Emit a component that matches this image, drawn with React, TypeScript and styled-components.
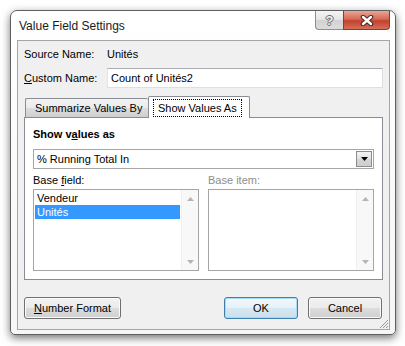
import styled, { createGlobalStyle } from "styled-components";

const GlobalStyle = createGlobalStyle`
  html, body {
    margin: 0;
    padding: 0;
    background: #ffffff;
  }
  body {
    font-family: "Liberation Sans", Arial, sans-serif;
    font-size: 11px;
    color: #000000;
  }
  * {
    box-sizing: border-box;
  }
`;

function CloseGlyph() {
  return (
    <svg width="14" height="11" viewBox="0 0 14 11">
      <path d="M3 2 L11 9 M11 2 L3 9" stroke="#4a2a24" strokeWidth="4.6" strokeLinecap="round" />
      <path d="M3 2 L11 9 M11 2 L3 9" stroke="#ffffff" strokeWidth="2.4" strokeLinecap="round" />
    </svg>
  );
}

function Arrow({ dir, color }: { dir: "up" | "down"; color: string }) {
  return (
    <svg width="7" height="4" viewBox="0 0 7 4">
      {dir === "down" ? <path d="M0 0 H7 L3.5 4 Z" fill={color} /> : <path d="M0 4 H7 L3.5 0 Z" fill={color} />}
    </svg>
  );
}

function Grip() {
  return (
    <svg width="10" height="10" viewBox="0 0 10 10">
      <path d="M9 1 L1 9 M9 4 L4 9 M9 7 L7 9" stroke="#9a9a9a" strokeWidth="1" />
    </svg>
  );
}

function ListBox({ items, selected }: { items: string[]; selected?: number }) {
  return (
    <ListFrame>
      <ListItems>
        {items.map((item, i) => (
          <ListItem key={item} $selected={i === selected}>
            {item}
          </ListItem>
        ))}
      </ListItems>
      <ScrollBar>
        <ScrollArrow>
          <Arrow dir="up" color="#b4b4b4" />
        </ScrollArrow>
        <ScrollArrow>
          <Arrow dir="down" color="#b4b4b4" />
        </ScrollArrow>
      </ScrollBar>
    </ListFrame>
  );
}

export default function App() {
  return (
    <>
      <GlobalStyle />
      <Stage>
        <Window>
          <TitleBar>
            <TitleText>Value Field Settings</TitleText>
            <CaptionButtons>
              <HelpButton>?</HelpButton>
              <CloseButton>
                <CloseGlyph />
              </CloseButton>
            </CaptionButtons>
          </TitleBar>
          <Client>
            <FieldGrid>
              <span>Source Name:</span>
              <span>Unités</span>
              <span>
                <Key>C</Key>ustom Name:
              </span>
              <TextBox>Count of Unités2</TextBox>
            </FieldGrid>
            <TabStrip>
              <Tab $width={123}>Summarize Values By</Tab>
              <Tab $width={102} $active>
                <FocusRect>Show Values As</FocusRect>
              </Tab>
            </TabStrip>
            <Panel>
              <SectionLabel>
                Show v<Key>a</Key>lues as
              </SectionLabel>
              <Combo>
                <ComboText>% Running Total In</ComboText>
                <ComboButton>
                  <Arrow dir="down" color="#000000" />
                </ComboButton>
              </Combo>
              <TwoColumns $top={4} $height={15}>
                <span>
                  Base <Key>f</Key>ield:
                </span>
                <DisabledLabel>Base item:</DisabledLabel>
              </TwoColumns>
              <TwoColumns $top={1} $height={82}>
                <ListBox items={["Vendeur", "Unités"]} selected={1} />
                <ListBox items={[]} />
              </TwoColumns>
            </Panel>
            <ButtonRow>
              <PushButton $width={97}>
                <Key>N</Key>umber Format
              </PushButton>
              <Spacer />
              <PushButton $width={74} $primary>
                OK
              </PushButton>
              <PushButton $width={74}>Cancel</PushButton>
            </ButtonRow>
            <GripCorner>
              <Grip />
            </GripCorner>
          </Client>
        </Window>
      </Stage>
    </>
  );
}

const Stage = styled.div`
  width: 405px;
  height: 346px;
  padding: 10px;
`;

const Window = styled.div`
  width: 386px;
  height: 325px;
  display: flex;
  flex-direction: column;
  border: 1px solid #5f5f5f;
  border-radius: 7px 7px 5px 5px;
  background: linear-gradient(#ffffff, #f6f6f6);
  box-shadow: 0 3px 9px rgba(0, 0, 0, 0.55);
`;

const TitleBar = styled.div`
  height: 29px;
  display: flex;
  align-items: flex-start;
  padding: 0 5px 0 8px;
`;

const TitleText = styled.div`
  margin-top: 7px;
  font-size: 12px;
  line-height: 16px;
  color: #1a1a1a;
`;

const CaptionButtons = styled.div`
  margin-left: auto;
  display: flex;
  height: 19px;
`;

const HelpButton = styled.div`
  width: 28px;
  height: 19px;
  border: 1px solid #8e8e8e;
  border-top: none;
  border-right: none;
  border-radius: 0 0 0 4px;
  background: linear-gradient(#f5f5f5, #e4e4e4 50%, #d2d2d2 51%, #dcdcdc);
  display: flex;
  align-items: center;
  justify-content: center;
  font-size: 13px;
  font-weight: bold;
  color: #f2f2f2;
  text-shadow: 1px 0 0 #6a6a6a, -1px 0 0 #6a6a6a, 0 1px 0 #6a6a6a, 0 -1px 0 #6a6a6a;
`;

const CloseButton = styled.div`
  width: 47px;
  height: 19px;
  border: 1px solid #8a3b30;
  border-top: none;
  border-radius: 0 0 4px 0;
  background: linear-gradient(#e9a597, #d66a55 45%, #c3412d 55%, #d4705a);
  display: flex;
  align-items: center;
  justify-content: center;
`;

const Client = styled.div`
  position: relative;
  width: 373px;
  height: 290px;
  margin-left: 6px;
  display: flex;
  flex-direction: column;
  padding: 3px 6px 10px 6px;
  background: #f0f0f0;
  border: 1px solid #a5a5a5;
`;

const Key = styled.span`
  text-decoration: underline;
`;

const FieldGrid = styled.div`
  display: grid;
  grid-template-columns: 83px 1fr;
  grid-template-rows: 19px 20px;
  row-gap: 5px;
  align-items: center;
`;

const TextBox = styled.div`
  height: 20px;
  line-height: 18px;
  padding-left: 3px;
  background: #ffffff;
  border: 1px solid #dbdfe6;
  border-top-color: #abadb3;
  border-left-color: #e2e3ea;
`;

const TabStrip = styled.div`
  margin-top: 8px;
  height: 21px;
  display: flex;
  align-items: flex-end;
  padding-left: 1px;
  position: relative;
  z-index: 1;
`;

const Tab = styled.div<{ $active?: boolean; $width: number }>`
  width: ${(p) => p.$width}px;
  height: ${(p) => (p.$active ? 22 : 19)}px;
  margin-bottom: ${(p) => (p.$active ? -1 : 0)}px;
  border: 1px solid #898c95;
  border-bottom: none;
  border-right: ${(p) => (p.$active ? "1px solid #898c95" : "none")};
  border-radius: 2px 2px 0 0;
  background: ${(p) => (p.$active ? "#ffffff" : "linear-gradient(#f3f3f3, #ebebeb 50%, #dddddd 51%, #cfcfcf)")};
  padding: ${(p) => (p.$active ? "2px 0 0 4px" : "0 0 0 9px")};
  line-height: 18px;
  white-space: nowrap;
`;

const FocusRect = styled.span`
  display: inline-block;
  height: 18px;
  line-height: 16px;
  padding: 0 4px;
  border: 1px dotted #000000;
`;

const Panel = styled.div`
  height: 163px;
  display: flex;
  flex-direction: column;
  padding: 9px 8px 8px 8px;
  background: #ffffff;
  border: 1px solid #898c95;
`;

const SectionLabel = styled.div`
  height: 15px;
  line-height: 15px;
  font-weight: bold;
`;

const Combo = styled.div`
  margin-top: 7px;
  height: 20px;
  display: flex;
  align-items: stretch;
  padding: 1px;
  background: #ffffff;
  border: 1px solid #a6a6a6;
`;

const ComboText = styled.div`
  flex: 1;
  line-height: 16px;
  padding-left: 2px;
`;

const ComboButton = styled.div`
  width: 16px;
  display: flex;
  align-items: center;
  justify-content: center;
  border: 1px solid #8c8c8c;
  background: linear-gradient(#f2f2f2, #e2e2e2 50%, #d4d4d4 51%, #cfcfcf);
`;

const TwoColumns = styled.div<{ $top: number; $height: number }>`
  margin-top: ${(p) => p.$top}px;
  height: ${(p) => p.$height}px;
  display: grid;
  grid-template-columns: 166px 166px;
  column-gap: 9px;
  line-height: 15px;
`;

const DisabledLabel = styled.span`
  color: #8d8d8d;
`;

const ListFrame = styled.div`
  display: flex;
  background: #ffffff;
  border: 1px solid #a6a6a6;
`;

const ListItems = styled.div`
  flex: 1;
  padding: 1px;
`;

const ListItem = styled.div<{ $selected?: boolean }>`
  height: 14px;
  line-height: 14px;
  padding-left: 2px;
  background: ${(p) => (p.$selected ? "#3399ff" : "transparent")};
  color: ${(p) => (p.$selected ? "#ffffff" : "#000000")};
`;

const ScrollBar = styled.div`
  width: 17px;
  display: flex;
  flex-direction: column;
  justify-content: space-between;
  background: #f8f8f8;
  border-left: 1px solid #f0f0f0;
`;

const ScrollArrow = styled.div`
  height: 17px;
  display: flex;
  align-items: center;
  justify-content: center;
`;

const ButtonRow = styled.div`
  margin-top: 17px;
  display: flex;
  gap: 10px;
  padding-right: 1px;
`;

const Spacer = styled.div`
  flex: 1;
`;

const PushButton = styled.div<{ $width: number; $primary?: boolean }>`
  width: ${(p) => p.$width}px;
  height: 22px;
  display: flex;
  align-items: center;
  justify-content: center;
  border: 1px solid ${(p) => (p.$primary ? "#3c7fb1" : "#707070")};
  border-radius: 3px;
  background: ${(p) =>
    p.$primary
      ? "linear-gradient(#f2f8fc, #e5f1f9 50%, #d6e8f3 51%, #cadfec)"
      : "linear-gradient(#f2f2f2, #ebebeb 50%, #dddddd 51%, #cfcfcf)"};
  box-shadow: inset 0 0 0 1px ${(p) => (p.$primary ? "#a9dbf6" : "#fbfbfb")};
`;

const GripCorner = styled.div`
  position: absolute;
  right: 0;
  bottom: 0;
  width: 10px;
  height: 10px;
  display: flex;
`;
